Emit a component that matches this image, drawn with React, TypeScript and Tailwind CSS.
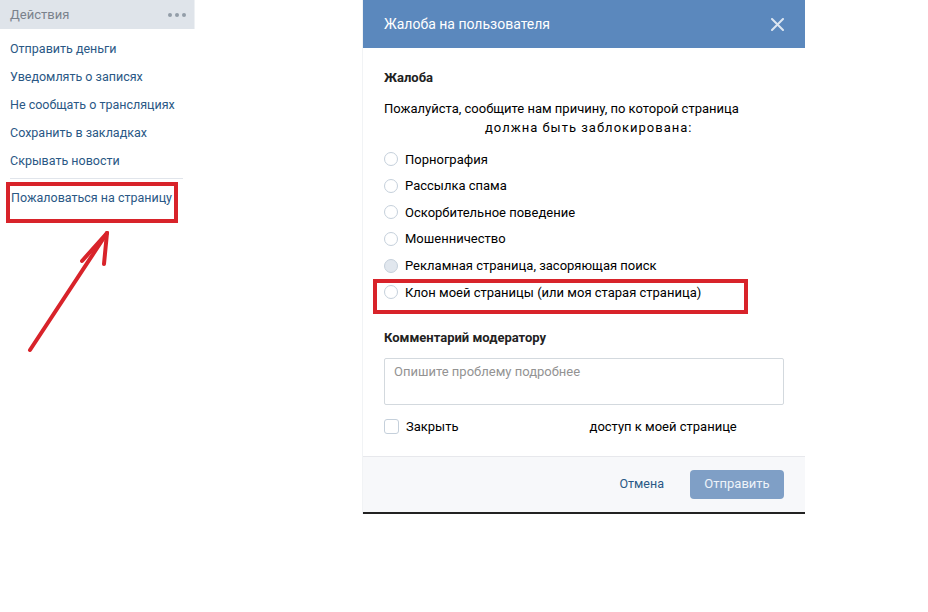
import React from "react";

const font = { fontFamily: "Roboto, 'Open Sans', Arial, sans-serif" };

const menu = [
  "Отправить деньги",
  "Уведомлять о записях",
  "Не сообщать о трансляциях",
  "Сохранить в закладках",
  "Скрывать новости",
];

const reasons = [
  "Порнография",
  "Рассылка спама",
  "Оскорбительное поведение",
  "Мошенничество",
  "Рекламная страница, засоряющая поиск",
  "Клон моей страницы (или моя старая страница)",
];

export default function App() {
  return (
    <div
      className="relative w-[928px] h-[612px] bg-white flex items-start text-[13px] overflow-hidden"
      style={font}
    >
      {/* Left actions panel */}
      <div className="relative w-[195px] shrink-0 text-[12.5px]">
        <div className="h-[29px] bg-[#dfe4ea] flex items-center justify-between pl-[10px] pr-[8px] border-r border-[#eef1f4]">
          <span className="text-[#7a828c] text-[13px]">Действия</span>
          <div className="flex gap-[3px] items-center">
            <span className="w-[4px] h-[4px] rounded-full bg-[#939da8]" />
            <span className="w-[4px] h-[4px] rounded-full bg-[#939da8]" />
            <span className="w-[4px] h-[4px] rounded-full bg-[#939da8]" />
          </div>
        </div>
        <div className="pt-[6px] flex flex-col">
          {menu.map((m) => (
            <div key={m} className="h-[28px] flex items-center pl-[10px] text-[#2a5885]">
              {m}
            </div>
          ))}
          <div className="mt-[3px] mx-[10px] w-[173px] h-px bg-[#e1e5eb]" />
          <div className="h-[40px] pt-[8px] pl-[11px] text-[#2a5885] leading-[22px]">
            Пожаловаться на страницу
          </div>
        </div>
        {/* red annotation box */}
        <div className="absolute left-[6px] top-[182px] w-[172px] h-[41px] border-[4px] border-[#d8232a]" />
      </div>

      {/* Modal */}
      <div className="ml-[167px] w-[443px] shrink-0 bg-white border-l border-[#f1f3f5]">
        <div className="h-[48px] bg-[#5b88bd] flex items-center justify-between pl-[21px] pr-[21px]">
          <span className="text-white text-[14px]">Жалоба на пользователя</span>
          <svg width="13" height="13" viewBox="0 0 13 13">
            <path d="M1 1 L12 12 M12 1 L1 12" stroke="#dce6f2" strokeWidth="2" strokeLinecap="round" />
          </svg>
        </div>

        <div className="relative px-[21px] pt-[21px] pb-[19px]">
          <div className="font-bold text-[#222] leading-[18px]">Жалоба</div>
          <div className="mt-[12px] text-black leading-[19px]">
            <div>Пожалуйста, сообщите нам причину, по которой страница</div>
            <div className="pl-[101px] tracking-[1px]">должна быть заблокирована:</div>
          </div>
          <div className="mt-[9px] flex flex-col">
            {reasons.map((r, i) => (
              <div key={r} className="h-[26.6px] flex items-center">
                <span
                  className={
                    "w-[14px] h-[14px] rounded-full border border-[#c5d0db] shrink-0 " +
                    (i === 4 ? "bg-[#e1e7ee]" : "bg-white")
                  }
                />
                <span className="ml-[7px] text-black">{r}</span>
              </div>
            ))}
          </div>
          <div className="mt-[23px] font-bold text-[#222] leading-[18px]">Комментарий модератору</div>
          <div className="mt-[11px] h-[47px] w-[400px] border border-[#d3d9de] rounded-[2px] px-[9px] pt-[4px] text-[#939393] leading-[18px]">
            Опишите проблему подробнее
          </div>
          <div className="mt-[12px] h-[20px] flex items-center">
            <span className="w-[15px] h-[15px] rounded-[3px] border border-[#c5d0db] bg-white shrink-0" />
            <span className="ml-[7px] text-black">Закрыть</span>
            <span className="ml-[131px] text-black">доступ к моей странице</span>
          </div>

          {/* red annotation box */}
          <div className="absolute left-[10px] top-[231px] w-[375px] h-[35px] border-[4px] border-[#d8232a]" />
        </div>

        <div className="h-[58px] bg-[#f7f8fa] border-t border-[#e7e8ec] border-b-2 border-b-[#222] flex items-center justify-end pr-[21px]">
          <span className="text-[#2a5885] text-[12.5px] mr-[26px]">Отмена</span>
          <div className="w-[94px] h-[29px] rounded-[4px] bg-[#7f9fc6] text-[#eef3f9] flex items-center justify-center">
            Отправить
          </div>
        </div>
      </div>

      {/* arrow annotation */}
      <svg className="absolute left-0 top-0 pointer-events-none" width="200" height="360">
        <g stroke="#d8232a" strokeWidth="4" strokeLinecap="round" fill="none">
          <path d="M30 350 L107 233" />
          <path d="M107 233 L82 261" />
          <path d="M107 233 L104 264" />
        </g>
      </svg>
    </div>
  );
}
